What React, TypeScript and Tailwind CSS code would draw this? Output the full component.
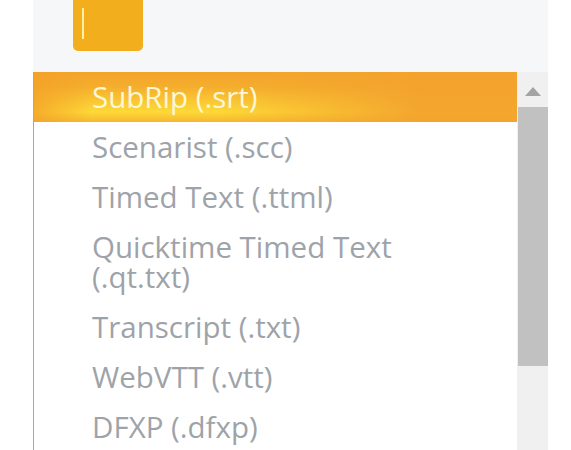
const formats = [
  "SubRip (.srt)",
  "Scenarist (.scc)",
  "Timed Text (.ttml)",
  "Quicktime Timed Text (.qt.txt)",
  "Transcript (.txt)",
  "WebVTT (.vtt)",
  "DFXP (.dfxp)",
];

const App = () => {
  return (
    <div className="w-full h-[450px] bg-white overflow-hidden" style={{ fontFamily: '"Open Sans", sans-serif' }}>
      <div className="ml-[33px] w-[515px]">
        {/* Toolbar with the active button */}
        <div className="h-[72px] bg-[#f6f7f9]">
          <div className="ml-[40px] w-[70px] h-[51px] rounded-b-[5px] bg-[#f2ae1c] pl-[9px] pt-[8px]">
            <div className="w-[2px] h-[31px] bg-[#fff3a0]"></div>
          </div>
        </div>

        {/* Dropdown list */}
        <div className="flex">
          <ul className="flex-1 border-l border-[#a9a9a9] bg-white">
            {formats.map((f, i) => (
              <li
                key={f}
                className={
                  i === 0
                    ? "pl-[58px] pr-[40px] py-[10px] text-[29.5px] leading-[30px] text-[#fff6d6] bg-[linear-gradient(to_right,rgba(243,162,40,0.8)_0%,rgba(243,162,40,0)_12%,rgba(243,162,40,0)_38%,rgba(243,163,45,0.95)_80%),linear-gradient(to_bottom,#f3a42b_0%,#f5ae2d_30%,#fbd035_68%,#fdd936_80%,#f7b630_100%)]"
                    : "pl-[58px] pr-[40px] py-[10px] text-[29.5px] leading-[30px] text-[#9ea3a9]"
                }
              >
                {f}
              </li>
            ))}
          </ul>

          {/* Scrollbar */}
          <div className="w-[31px] h-[378px] bg-[#f0f0f0] flex flex-col">
            <div className="h-[35px] flex items-center justify-center pt-[4px]">
              <svg width="16" height="9" viewBox="0 0 16 9">
                <polygon points="8,0 16,9 0,9" fill="#a3a3a3" />
              </svg>
            </div>
            <div className="ml-[1px] h-[259px] bg-[#c1c1c1]"></div>
          </div>
        </div>
      </div>
    </div>
  );
};

export default App;
